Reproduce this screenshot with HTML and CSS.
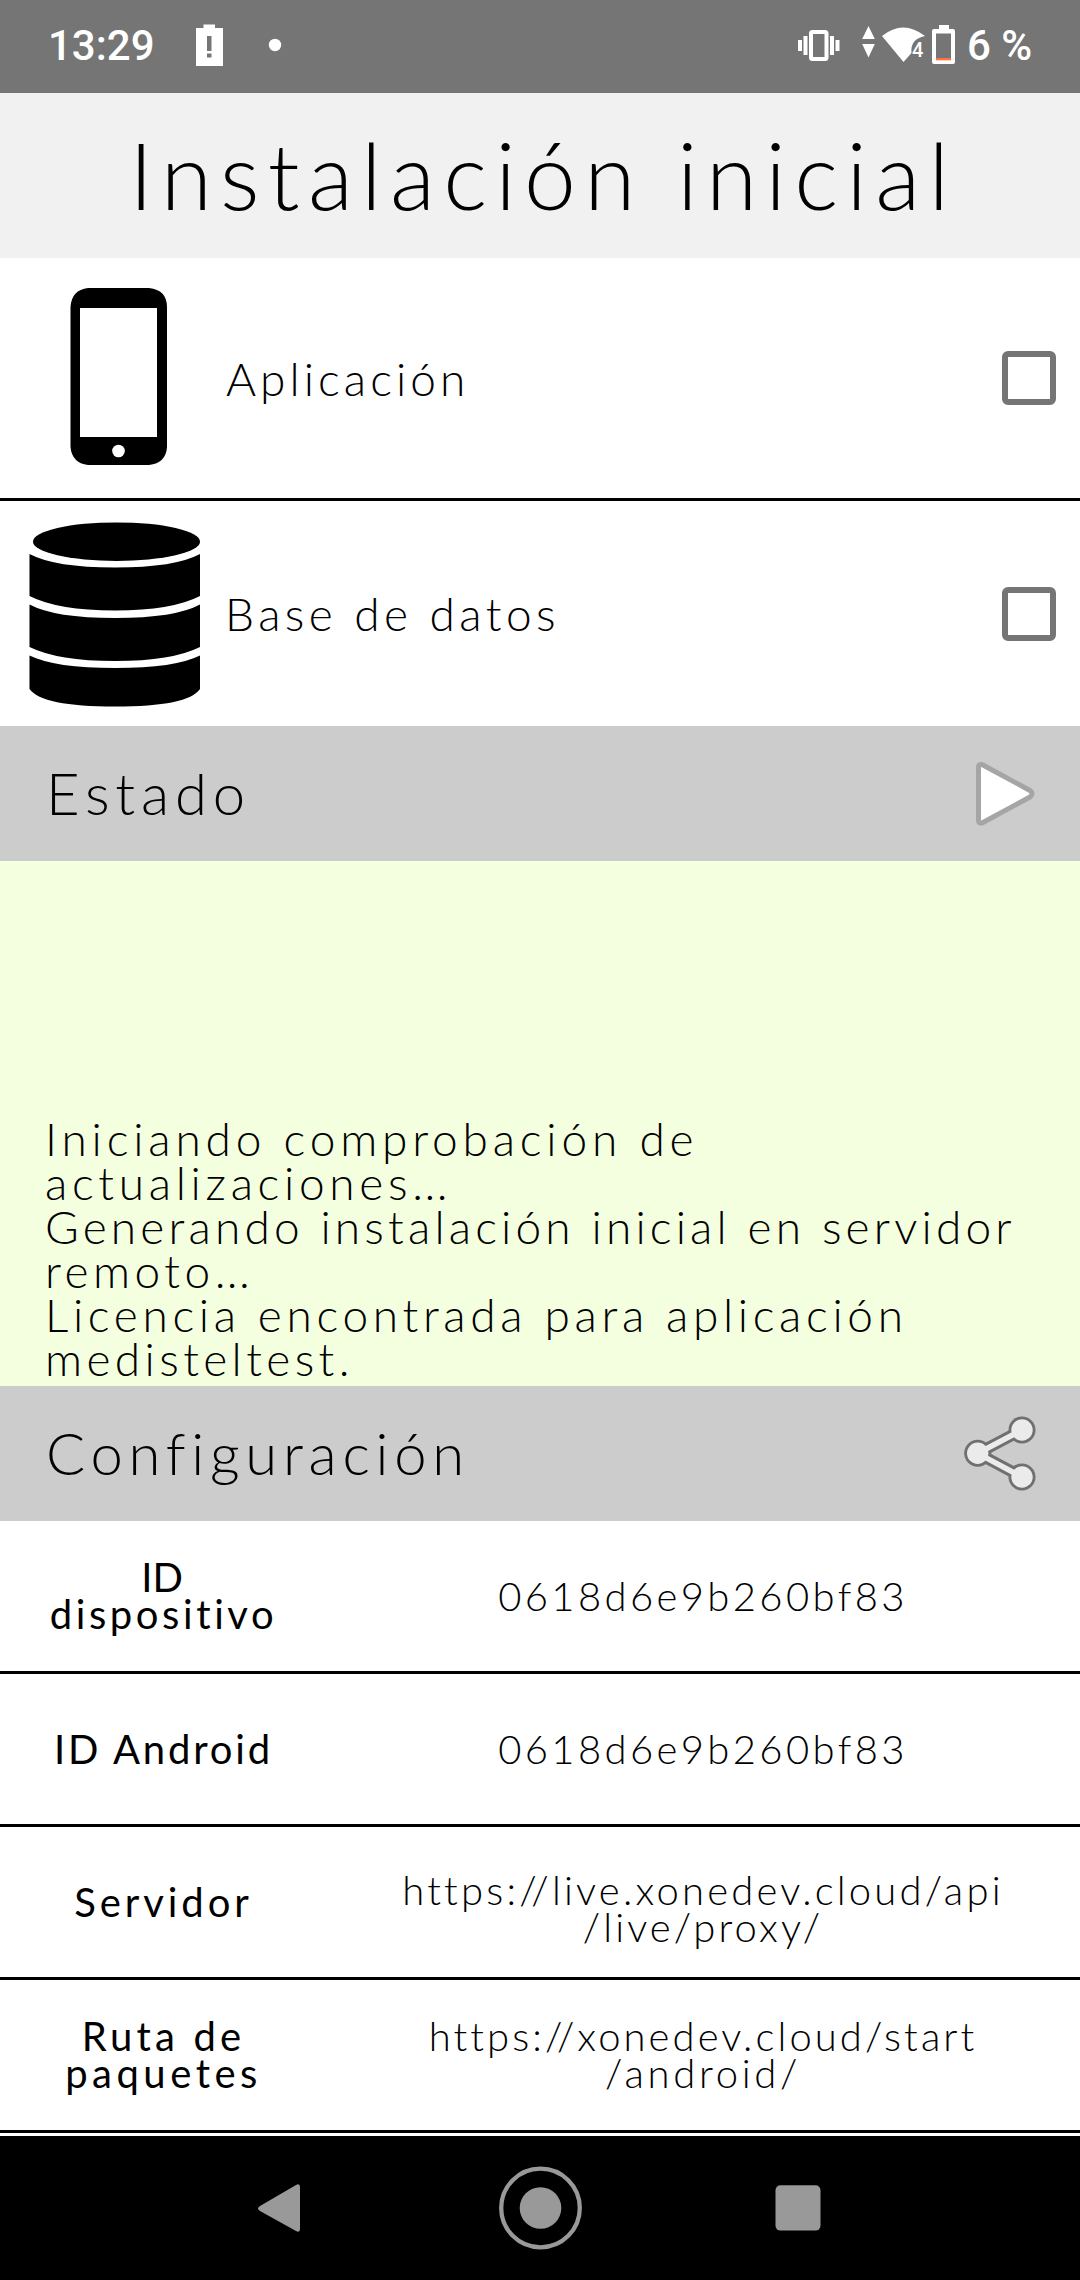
FILE: index.html
```html
<!DOCTYPE html>
<html lang="es">
<head>
<meta charset="utf-8">
<title>Instalación inicial</title>
<link rel="stylesheet" href="styles.css">
</head>
<body>
<div class="screen">
  <header class="status">
    <span class="clock">13:29</span>
    <svg class="status-left" width="90" height="93" viewBox="195 0 90 93" fill="#fff">
      <path fill-rule="evenodd" d="M196 28h7.500v-3.500h11.500V28h8v38h-27zM207 36v15h4.500V36zM207 53.500v4h4.500v-4z"/>
      <circle cx="275" cy="45" r="6.200"/>
    </svg>
    <svg class="status-right" width="166" height="93" viewBox="795 0 166 93" fill="#fff">
      <path d="M798 40h4v11h-4zM803.500 36h4v19h-4zM830 36h4v19h-4zM835.500 40h4v11h-4z"/>
      <rect x="811" y="32" width="15.500" height="27" rx="1.500" fill="none" stroke="#fff" stroke-width="4"/>
      <path d="M868.500 26l6.300 13h-12.600zM868.500 57.500l6.300-13.500h-12.600z"/>
      <path d="M882 36Q903 19 925 36Q910 39 911.500 53L903.500 62z"/>
      <text class="wifi-gen" x="912" y="57">4</text>
      <path fill-rule="evenodd" d="M939 25h10v4h4q2 0 2 2v31q0 2-2 2h-19q-2 0-2-2V31q0-2 2-2h5zM936 33.500V60h15V33.500z"/>
      <path fill="#ff7043" d="M936 58h15v2.300h-15z"/>
    </svg>
    <span class="percent">6 %</span>
  </header>

  <h1 class="title">Instalación inicial</h1>

  <section class="item item-first">
    <svg class="item-icon" width="228" height="240" viewBox="0 258 228 240">
      <path fill-rule="evenodd" d="M88 288h61q18 2 18 19v140q-1 16-18 18H88q-16-2-17.500-18V307q1-17 17.500-19zM80 308v129h77V308z"/>
      <circle cx="118.500" cy="451" r="6.300" fill="#fff"/>
    </svg>
    <span class="item-name name-app">Aplicación</span>
    <span class="checkbox"></span>
  </section>

  <section class="item">
    <svg class="item-icon" width="228" height="225" viewBox="0 501 228 225">
      <ellipse cx="116.500" cy="541.700" rx="83.500" ry="19.300"/>
      <path d="M29.500 554Q55 567.500 115 567.500T200 554V596Q172 610.500 115 610.500T29.500 596z"/>
      <path d="M29.500 604.500Q55 618 115 618T200 604.500V647Q172 661 115 661T29.500 647z"/>
      <path d="M29.500 655.500Q55 668 115 668T200 655.500V689Q188 706.500 115 706.500T29.500 689z"/>
    </svg>
    <span class="item-name name-db">Base de datos</span>
    <span class="checkbox"></span>
  </section>

  <h2 class="bar">
    <span class="bar-state">Estado</span>
    <svg width="72" height="135" viewBox="966 726 72 135">
      <path d="M978.500 767q0-3 3.500-2.500L1030 790.500q4 3 0 6.500L982 823q-3.500 .5-3.500-2.500z" fill="#fff" stroke="#a5a5a5" stroke-width="5" stroke-linejoin="round"/>
    </svg>
  </h2>

  <section class="log">
    <span class="s1">Iniciando comprobación de</span>
    <span class="s2">actualizaciones<span class="dots">...</span></span>
    <span class="s3">Generando instalación inicial en servidor</span>
    <span class="s4">remoto<span class="dots">...</span></span>
    <span class="s6">Licencia encontrada para aplicación</span>
    <span class="s5">medisteltest.</span>
  </section>

  <h2 class="bar">
    <span class="bar-config">Configuración</span>
    <svg width="76" height="135" viewBox="962 1386 76 135">
      <g fill="#707070" stroke="#707070">
        <path d="M1022 1430L977.700 1453.300L1022 1477" fill="none" stroke-width="11.500"/>
        <circle cx="1022" cy="1430" r="13.500" stroke="none"/>
        <circle cx="977.700" cy="1453.300" r="13.500" stroke="none"/>
        <circle cx="1022" cy="1477" r="13.500" stroke="none"/>
      </g>
      <g fill="#ebebeb" stroke="#ebebeb">
        <path d="M1022 1430L977.700 1453.300L1022 1477" fill="none" stroke-width="5.500"/>
        <circle cx="1022" cy="1430" r="10.700" stroke="none"/>
        <circle cx="977.700" cy="1453.300" r="10.700" stroke="none"/>
        <circle cx="1022" cy="1477" r="10.700" stroke="none"/>
      </g>
    </svg>
  </h2>

  <dl class="config">
    <div class="row">
      <dt><span class="k-id">ID</span><span class="k-device">dispositivo</span></dt>
      <dd><span class="v-id">0618d6e9b260bf83</span></dd>
    </div>
    <div class="row">
      <dt><span class="k-android">ID Android</span></dt>
      <dd><span class="v-id">0618d6e9b260bf83</span></dd>
    </div>
    <div class="row">
      <dt><span class="k-server">Servidor</span></dt>
      <dd class="low"><span class="v-live">https://live.xonedev.cloud/api</span><span class="v-proxy">/live/proxy/</span></dd>
    </div>
    <div class="row">
      <dt><span class="k-path">Ruta de</span><span class="k-packages">paquetes</span></dt>
      <dd><span class="v-start">https://xonedev.cloud/start</span><span class="v-droid">/android/</span></dd>
    </div>
  </dl>

  <nav class="nav">
    <svg width="50" height="144" viewBox="254 2136 50 144"><path d="M260 2206L296 2185q4-2 4 2v42q0 4-4 2L260 2211q-4-2.500 0-5z" fill="#999"/></svg>
    <svg width="90" height="144" viewBox="493.500 2136 90 144"><circle cx="540" cy="2208" r="39.300" fill="none" stroke="#999" stroke-width="4.300"/><circle cx="540" cy="2208" r="20.800" fill="#999"/></svg>
    <svg width="50" height="144" viewBox="773 2136 50 144"><rect x="775.500" y="2185.300" width="45" height="45.300" rx="5" fill="#999"/></svg>
  </nav>
</div>
</body>
</html>
```
FILE: styles.css
```css
* { box-sizing: border-box; margin: 0; padding: 0; }
body {
  background: #fff;
  color: #000;
  font-family: Lato, "Open Sans", sans-serif;
  font-weight: 300;
}
svg { display: block; flex: none; }
.screen { width: 1080px; height: 2280px; display: flex; flex-direction: column; overflow: hidden; }

.status {
  height: 93px;
  flex: none;
  display: flex;
  background: #757575;
  color: #fff;
  font: 500 42px/92px Roboto, sans-serif;
  padding-left: 48px;
  white-space: nowrap;
}
.clock { width: 147px; }
.status-right { margin-left: 510px; }
.percent { padding-left: 6px; }
.wifi-gen { font: 500 20px Roboto, sans-serif; }

.title {
  height: 165px;
  flex: none;
  background: #f1f1f1;
  font-size: 93px;
  font-weight: 300;
  line-height: 163px;
  letter-spacing: 8.22px;
  padding-left: 129px;
  white-space: nowrap;
}

.item { height: 225px; flex: none; display: flex; align-items: center; padding-right: 24px; }
.item-first { height: 243px; border-bottom: 3px solid #000; }
.item-name { flex: 1; font-size: 46px; }
.name-app { letter-spacing: 4.08px; margin-left: -2px; }
.name-db { letter-spacing: 4.46px; margin-left: -3px; }
.checkbox { width: 54px; height: 54px; border: 6px solid #757575; border-radius: 6px; }

.bar {
  height: 135px;
  flex: none;
  display: flex;
  justify-content: space-between;
  background: #ccc;
  font-size: 58px;
  font-weight: 300;
  line-height: 134px;
  padding: 0 42px 0 46px;
}
.bar-state { letter-spacing: 5.8px; }
.bar-config { letter-spacing: 5.75px; }

.log {
  height: 525px;
  flex: none;
  display: flex;
  flex-direction: column;
  justify-content: flex-end;
  background: #f4ffe0;
  padding: 0 0 5px 45px;
  font-size: 46px;
  line-height: 44px;
  white-space: nowrap;
}
.s1 { letter-spacing: 4.84px; }
.s2 { letter-spacing: 4.7px; }
.s3 { letter-spacing: 4.18px; }
.s4 { letter-spacing: 4.5px; }
.s5 { letter-spacing: 4.4px; }
.s6 { letter-spacing: 4.68px; }
.dots { letter-spacing: 1.5px; }

.config { height: 615px; flex: none; background: #fff; font-size: 40px; line-height: 37px; white-space: nowrap; }
.row { height: 153px; display: flex; align-items: center; border-bottom: 3px solid #000; }
.row span { display: block; }
dt { width: 324px; font-weight: 400; text-align: center; padding: 0 0 0 3px; }
dd { flex: 1; text-align: center; padding: 0 0 0 2px; }
.low { padding-top: 14px; }
.k-id { letter-spacing: 0; margin-right: 3px; }
.k-device { letter-spacing: 3.59px; }
.k-android { letter-spacing: 2.82px; }
.k-server { letter-spacing: 3.92px; }
.k-path { letter-spacing: 4.15px; }
.k-packages { letter-spacing: 4.5px; }
.v-id { letter-spacing: 3.38px; }
.v-live { letter-spacing: 3.2px; }
.v-proxy { letter-spacing: 3.1px; }
.v-start { letter-spacing: 3.08px; }
.v-droid { letter-spacing: 3.68px; }

.nav { height: 144px; flex: none; display: flex; justify-content: space-between; background: #000; padding: 0 257px 0 254px; }
```
